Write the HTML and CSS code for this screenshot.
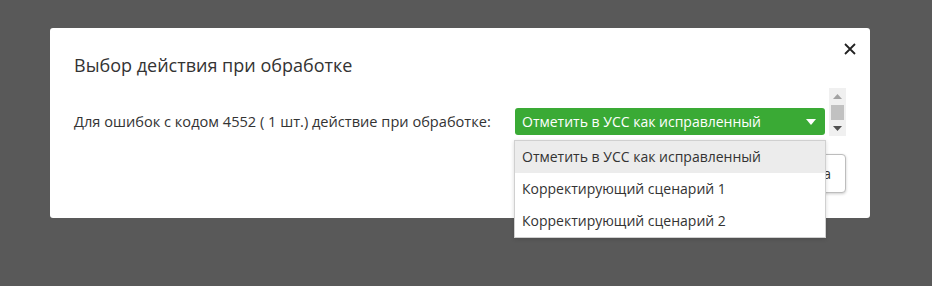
FILE: index.html
```html
<!DOCTYPE html>
<html lang="ru">
<head>
<meta charset="utf-8">
<link rel="stylesheet" href="styles.css">
</head>
<body>
<div class="modal">
  <div class="title">Выбор действия при обработке</div>
  <svg class="close" width="12" height="12" viewBox="0 0 12 12"><path d="M1 1L11 11M11 1L1 11" stroke="#222" stroke-width="1.8"/></svg>
  <div class="row">
    <div class="label">Для ошибок с кодом 4552 ( 1 шт.) действие при обработке:</div>
    <div class="group">
      <div class="select">
        <span>Отметить в УСС как исправленный</span>
        <svg class="caret" width="10" height="6" viewBox="0 0 10 6"><path d="M0 0H10L5 6Z" fill="#fff"/></svg>
      </div>
      <div class="scroll">
        <svg class="arr" width="9" height="5" viewBox="0 0 9 5"><path d="M0 5H9L4.5 0Z" fill="#a3a3a3"/></svg>
        <div class="thumb"></div>
        <svg class="arr" width="9" height="5" viewBox="0 0 9 5"><path d="M0 0H9L4.5 5Z" fill="#505050"/></svg>
      </div>
    </div>
  </div>
  <div class="footer">
    <button class="btn">Отмена</button>
  </div>
  <ul class="menu">
    <li class="item active">Отметить в УСС как исправленный</li>
    <li class="item">Корректирующий сценарий 1</li>
    <li class="item">Корректирующий сценарий 2</li>
  </ul>
</div>
</body>
</html>
```
FILE: styles.css
```css
html, body { margin: 0; padding: 0; }
body {
  background: #595959;
  width: 932px;
  height: 286px;
  overflow: hidden;
  font-family: "Open Sans", "Noto Sans", sans-serif;
  color: #333;
}
.modal {
  position: relative;
  box-sizing: border-box;
  margin: 28px 0 0 50px;
  width: 820px;
  height: 190px;
  background: #fff;
  border-radius: 3px;
  padding: 25px 24px 25px 24px;
}
.title {
  font-size: 18px;
  line-height: 24px;
  color: #333;
  height: 24px;
}
.close {
  position: absolute;
  right: 14px;
  top: 15px;
}
.row {
  margin-top: 11px;
  height: 48px;
  display: flex;
  align-items: flex-end;
}
.label {
  font-size: 14.6px;
  line-height: 27px;
  height: 27px;
  margin-bottom: 1px;
}
.group {
  margin-left: auto;
  display: flex;
  align-items: flex-end;
  gap: 4px;
}
.select {
  box-sizing: border-box;
  width: 310px;
  height: 27px;
  margin-bottom: 1px;
  background: #3aaa35;
  border-radius: 3px;
  color: #fff;
  font-size: 14px;
  display: flex;
  align-items: center;
  justify-content: space-between;
  padding: 0 9px 0 7px;
}
.scroll {
  width: 17px;
  height: 48px;
  background: #f0f0f0;
  display: flex;
  flex-direction: column;
  align-items: center;
  justify-content: space-between;
  padding: 6px 0 5px;
  box-sizing: border-box;
}
.thumb {
  width: 13px;
  height: 15px;
  background: #c1c1c1;
}
.footer {
  margin-top: 18px;
  display: flex;
  justify-content: flex-end;
}
.btn {
  box-sizing: border-box;
  height: 39px;
  padding: 0 14px;
  background: #fff;
  border: 1px solid #bdbdbd;
  border-radius: 4px;
  box-shadow: 0 1px 3px rgba(0,0,0,0.2);
  font-family: inherit;
  font-size: 14px;
  color: #333;
}
.menu {
  position: absolute;
  left: 464px;
  top: 112px;
  width: 312px;
  box-sizing: border-box;
  margin: 0;
  padding: 0;
  list-style: none;
  background: #fff;
  border: 1px solid #d0d0d0;
  box-shadow: 0 1px 4px rgba(0,0,0,0.15);
}
.item {
  height: 32px;
  line-height: 32px;
  padding-left: 7px;
  font-size: 14px;
  color: #333;
}
.item.active { background: #ececec; }
```
